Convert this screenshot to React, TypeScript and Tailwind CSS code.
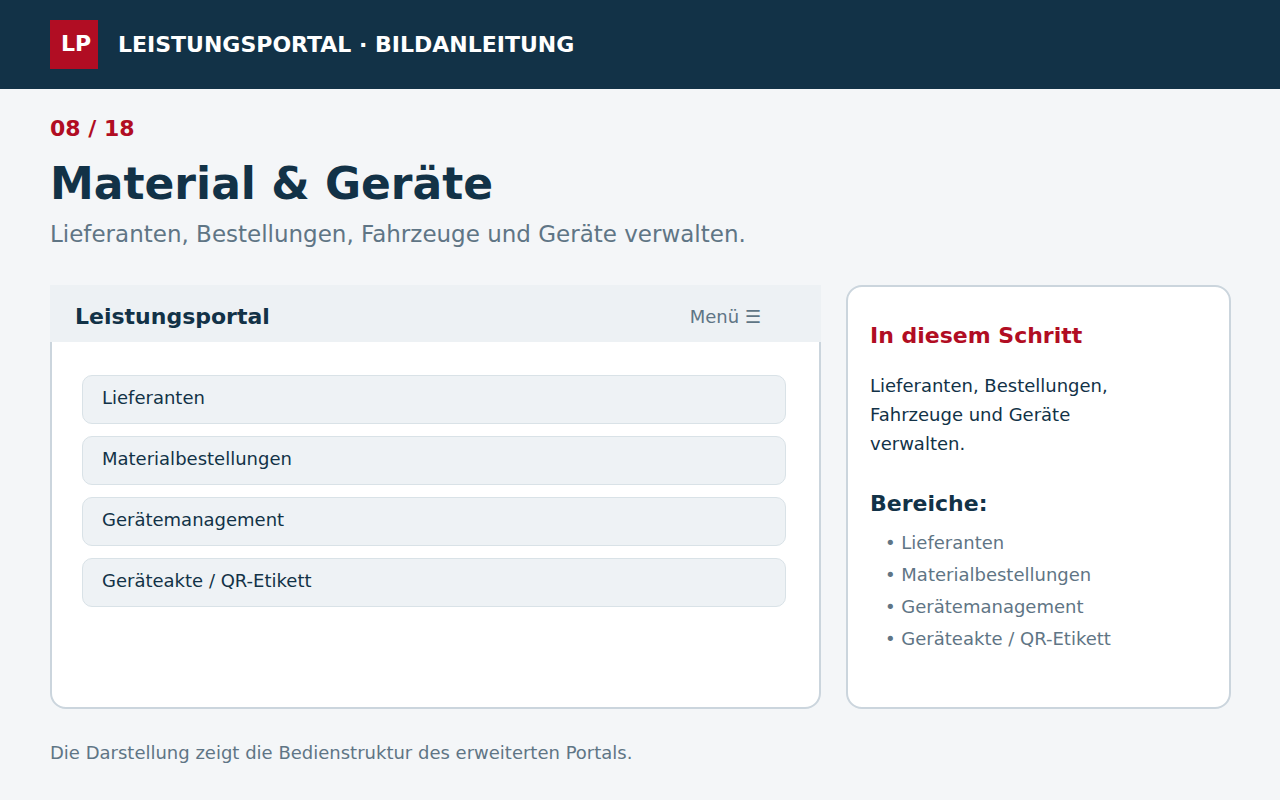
import React from "react";

const areas = [
  "Lieferanten",
  "Materialbestellungen",
  "Gerätemanagement",
  "Geräteakte / QR-Etikett",
];

const Header = () => (
  <header className="flex items-center gap-5 bg-[#123247] px-[50px] py-5 text-[22px] leading-6 font-bold text-white">
    <div className="flex h-[49px] w-12 items-center justify-center bg-[#b10d23] pb-0.5 pl-1">
      LP
    </div>
    <span>LEISTUNGSPORTAL · BILDANLEITUNG</span>
  </header>
);

const PortalPreview = () => (
  <section className="rounded-2xl border-2 border-[#cbd5dd] bg-white">
    <div className="-mx-0.5 -mt-0.5 flex h-[57px] items-center justify-between bg-[#edf1f4] pt-1.5 pr-[60px] pl-[25px]">
      <h2 className="text-[22px] font-bold">Leistungsportal</h2>
      <button type="button" className="text-lg text-[#5f7585]">
        Menü ☰
      </button>
    </div>
    <ul className="flex flex-col gap-3 pt-[33px] pr-[33px] pl-[30px]">
      {areas.map((area) => (
        <li
          key={area}
          className="h-[49px] rounded-[10px] border border-[#d9e2e7] bg-[#eef2f5] px-[19px] pt-2 text-lg"
        >
          {area}
        </li>
      ))}
    </ul>
  </section>
);

const StepInfo = () => (
  <aside className="rounded-2xl border-2 border-[#cbd5dd] bg-white px-[22px] pt-[33px]">
    <h2 className="text-[22px] leading-8 font-bold text-[#b10d23]">
      In diesem Schritt
    </h2>
    <p className="mt-[19px] max-w-[270px] text-lg leading-[29px]">
      Lieferanten, Bestellungen, Fahrzeuge und Geräte verwalten.
    </p>
    <h3 className="mt-[30px] text-[22px] leading-8 font-bold">Bereiche:</h3>
    <ul className="mt-[7px] pl-[15px] text-lg leading-8 text-[#5f7585]">
      {areas.map((area) => (
        <li key={area}>• {area}</li>
      ))}
    </ul>
  </aside>
);

export default function App() {
  return (
    <div className="min-h-screen bg-[#f4f6f8] font-['DejaVu_Sans',sans-serif] text-[#123247]">
      <Header />
      <main className="pt-6 pr-[49px] pl-[50px]">
        <p className="text-[22px] leading-8 font-bold text-[#b10d23]">
          08 / 18
        </p>
        <h1 className="mt-[13px] text-[44px] leading-[52px] font-bold">
          Material &amp; Geräte
        </h1>
        <p className="mt-2 text-[23px] leading-8 text-[#5f7585]">
          Lieferanten, Bestellungen, Fahrzeuge und Geräte verwalten.
        </p>
        <div className="mt-[35px] grid min-h-[424px] grid-cols-[1fr_385px] gap-[25px]">
          <PortalPreview />
          <StepInfo />
        </div>
      </main>
      <footer className="px-[50px] pt-[30px] pb-7 text-lg text-[#5f7585]">
        Die Darstellung zeigt die Bedienstruktur des erweiterten Portals.
      </footer>
    </div>
  );
}
